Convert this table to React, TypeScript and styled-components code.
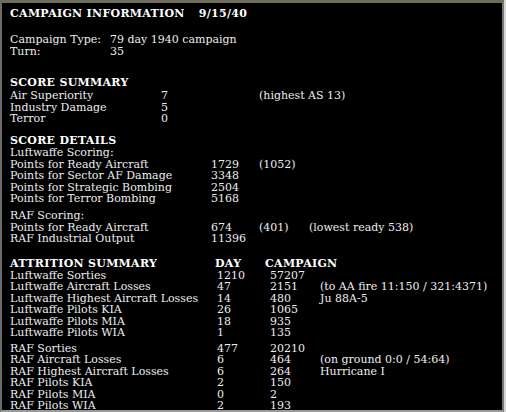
import React from "react";
import styled, { createGlobalStyle } from "styled-components";

const Global = createGlobalStyle`
  html, body { margin: 0; padding: 0; background: #d4d4d4; }
  body { width: 506px; height: 412px; overflow: hidden; }
`;

const Panel = styled.div`
  box-sizing: border-box;
  width: 504px;
  height: 412px;
  background: #000;
  border-top: 3px solid #6f6d58;
  border-left: 2px solid #6b6b6b;
  border-right: 2px solid #777;
  border-bottom: 2px solid #9a9a9a;
  padding: 5px 0 0 8px;
  color: #ededed;
  font-family: "DejaVu Serif", serif;
  font-size: 11px;
  line-height: 11.6px;
`;

const Heading = styled.div<{ $mt?: number }>`
  font-weight: bold;
  color: #fff;
  line-height: 12px;
  letter-spacing: 0.3px;
  margin-top: ${(p) => p.$mt ?? 0}px;
  display: flex;
  gap: 14px;
`;

const Section = styled.div<{ $mt?: number; $lh?: number }>`
  margin-top: ${(p) => p.$mt ?? 0}px;
  line-height: ${(p) => p.$lh ?? 11.6}px;
`;

const Row = styled.div<{ $cols: string }>`
  display: grid;
  grid-template-columns: ${(p) => p.$cols};
  white-space: nowrap;
`;

const HeadRow = styled(Row)<{ $mt?: number }>`
  font-weight: bold;
  color: #fff;
  line-height: 12px;
  letter-spacing: 0.3px;
  margin-top: ${(p) => p.$mt ?? 0}px;
`;

const Num = styled.span`
  font-variant-numeric: oldstyle-nums;
`;

const summary = [
  ["Air Superiority", "7", "(highest AS 13)"],
  ["Industry Damage", "5", ""],
  ["Terror", "0", ""],
];

const luft = [
  ["Points for Ready Aircraft", "1729", "(1052)"],
  ["Points for Sector AF Damage", "3348", ""],
  ["Points for Strategic Bombing", "2504", ""],
  ["Points for Terror Bombing", "5168", ""],
];

const raf = [
  ["Points for Ready Aircraft", "674", "(401)", "(lowest ready 538)"],
  ["RAF Industrial Output", "11396", "", ""],
];

const attrL = [
  ["Luftwaffe Sorties", "1210", "57207", ""],
  ["Luftwaffe Aircraft Losses", "47", "2151", "(to AA fire 11:150 / 321:4371)"],
  ["Luftwaffe Highest Aircraft Losses", "14", "480", "Ju 88A-5"],
  ["Luftwaffe Pilots KIA", "26", "1065", ""],
  ["Luftwaffe Pilots MIA", "18", "935", ""],
  ["Luftwaffe Pilots WIA", "1", "135", ""],
];

const attrR = [
  ["RAF Sorties", "477", "20210", ""],
  ["RAF Aircraft Losses", "6", "464", "(on ground 0:0 / 54:64)"],
  ["RAF Highest Aircraft Losses", "6", "264", "Hurricane I"],
  ["RAF Pilots KIA", "2", "150", ""],
  ["RAF Pilots MIA", "0", "2", ""],
  ["RAF Pilots WIA", "2", "193", ""],
];

const SUM_COLS = "151px 98px 1fr";
const DET_COLS = "201px 48px 50px 1fr";
const ATT_HEAD = "205px 50px 1fr";
const ATT_COLS = "207px 53px 50px 1fr";

export default function App() {
  return (
    <>
      <Global />
      <Panel>
        <Heading>
          <span>CAMPAIGN INFORMATION</span>
          <span>9/15/40</span>
        </Heading>
        <Section $mt={14}>
          <Row $cols="100px 1fr">
            <span>Campaign Type:</span>
            <span>79 day 1940 campaign</span>
          </Row>
          <Row $cols="100px 1fr">
            <span>Turn:</span>
            <Num>35</Num>
          </Row>
        </Section>

        <Heading $mt={20}>SCORE SUMMARY</Heading>
        <Section $mt={1}>
          {summary.map((r) => (
            <Row key={r[0]} $cols={SUM_COLS}>
              <span>{r[0]}</span>
              <Num>{r[1]}</Num>
              <span>{r[2]}</span>
            </Row>
          ))}
        </Section>

        <Heading $mt={10}>SCORE DETAILS</Heading>
        <Section>
          <Row $cols="1fr">
            <span>Luftwaffe Scoring:</span>
          </Row>
          {luft.map((r) => (
            <Row key={r[0]} $cols={DET_COLS}>
              <span>{r[0]}</span>
              <Num>{r[1]}</Num>
              <Num>{r[2]}</Num>
              <span />
            </Row>
          ))}
        </Section>
        <Section $mt={5}>
          <Row $cols="1fr">
            <span>RAF Scoring:</span>
          </Row>
          {raf.map((r) => (
            <Row key={r[1]} $cols={DET_COLS}>
              <span>{r[0]}</span>
              <Num>{r[1]}</Num>
              <Num>{r[2]}</Num>
              <span>{r[3]}</span>
            </Row>
          ))}
        </Section>

        <HeadRow $cols={ATT_HEAD} $mt={13}>
          <span>ATTRITION SUMMARY</span>
          <span>DAY</span>
          <span>CAMPAIGN</span>
        </HeadRow>
        <Section $lh={11.5}>
          {attrL.map((r) => (
            <Row key={r[0]} $cols={ATT_COLS}>
              <span>{r[0]}</span>
              <Num>{r[1]}</Num>
              <Num>{r[2]}</Num>
              <span>{r[3]}</span>
            </Row>
          ))}
        </Section>
        <Section $mt={4} $lh={11.5}>
          {attrR.map((r) => (
            <Row key={r[0]} $cols={ATT_COLS}>
              <span>{r[0]}</span>
              <Num>{r[1]}</Num>
              <Num>{r[2]}</Num>
              <span>{r[3]}</span>
            </Row>
          ))}
        </Section>
      </Panel>
    </>
  );
}
